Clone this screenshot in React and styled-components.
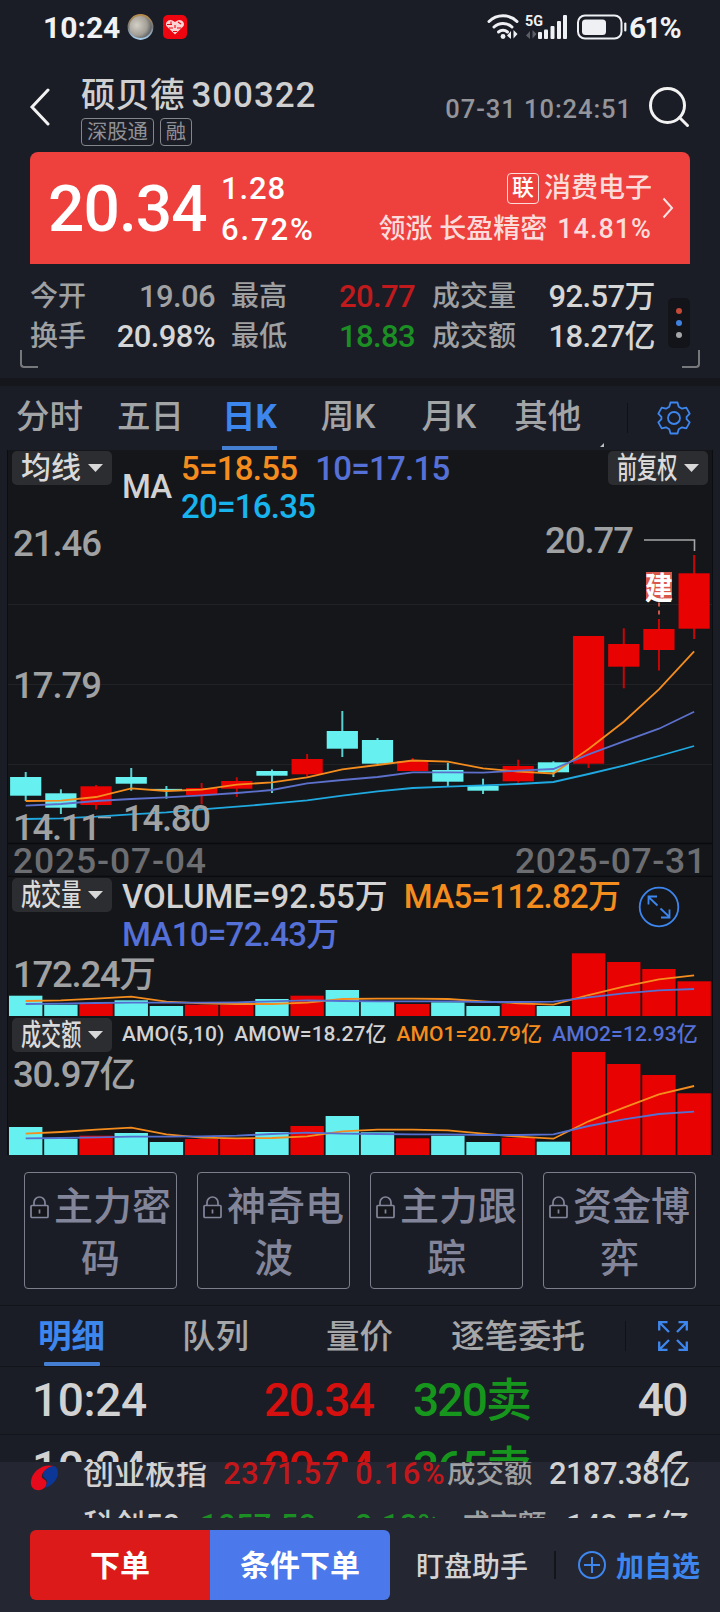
import React from 'react';
import styled, { createGlobalStyle } from 'styled-components';

const RED = '#e80202';
const CYAN = '#66f0ef';
const ORANGE = '#f58d1e';
const INDIGO = '#5570d6';
const SKY = '#18b4ee';
const BLUE = '#3d86ee';

const SLOT = 35.18;
const FIRST = 25.7;
const cx = (i) => FIRST + SLOT * i;

// [up, bodyTop, bodyBottom, wickTop, wickBottom]
const candles = [
  [0, 777, 795.7, 772, 801],
  [0, 793.3, 807.7, 789.3, 814],
  [1, 786.3, 805, 785, 809.5],
  [0, 777, 783.7, 768, 790.7],
  [0, 788.9, 790.1, 786, 798.7],
  [1, 788, 795, 783, 804.3],
  [1, 781, 788.7, 777.3, 797],
  [0, 771, 775.7, 769.5, 793],
  [1, 759, 774.3, 754, 776.7],
  [0, 731, 748.7, 711, 757],
  [0, 740, 763.7, 738, 763.7],
  [1, 761, 771, 758, 771],
  [0, 770, 781.7, 762.7, 786],
  [0, 785.7, 790.7, 778.7, 794],
  [1, 766, 781.3, 759.7, 782.7],
  [0, 762.3, 772.3, 761.3, 777],
  [1, 636, 763.7, 636, 768],
  [1, 644, 666.7, 628.3, 688.3],
  [1, 629, 650, 619, 670.5],
  [1, 573.3, 628.7, 555, 639],
];

const ma5 = [801, 800.7, 797, 788.3, 791, 789.7, 784.7, 782.3, 777.3, 769.3, 765, 760.5, 761.7, 768.3, 771.7, 773.5, 749, 721.7, 689.3, 651.3];
const ma10 = [805.7, 804, 801, 799, 797.3, 795.3, 793, 790, 783.3, 780, 777, 772.3, 772.3, 772.7, 770.7, 769, 754.3, 741.3, 728.7, 711.7];
const ma20 = [819, 818.3, 816.7, 814.3, 812.3, 809.3, 806.7, 803.7, 800.3, 795.7, 791.3, 788, 786.7, 785.3, 784, 782, 774, 765.7, 756, 746];

const volume = [995.7, 1004.7, 1003.3, 1000.3, 1006, 1004.7, 1004.7, 999, 995.7, 990, 1002, 1004, 1002.3, 1006, 1004, 1006, 953.3, 962, 969, 981.3];
const vol5 = [1001, 1000.3, 998.7, 996.7, 1001.7, 1003.3, 1004, 1004, 1002.7, 999, 998.7, 998.7, 999, 1001.3, 1003.3, 1004.7, 995, 986.7, 979.3, 975.3];
const vol10 = [1004, 1003.7, 1003, 1002.7, 1002.7, 1002.7, 1002.3, 1001.3, 1000.3, 1001, 1001.3, 1001.3, 1001.3, 1002, 1002, 1001.7, 997.3, 993.3, 990.3, 989];

const amount = [1127, 1139, 1135.7, 1133, 1142, 1139, 1139, 1132, 1126, 1116, 1132.3, 1138.3, 1135.7, 1142, 1137.7, 1141.7, 1052, 1064, 1075, 1093.3];
const amo5 = [1133.7, 1132, 1129.7, 1127.7, 1134.3, 1137.7, 1138.3, 1138, 1136.3, 1131.3, 1129.7, 1129.7, 1130.3, 1133.7, 1136.7, 1138.7, 1121.3, 1107.7, 1094.3, 1086];
const amo10 = [1138.3, 1138, 1137.3, 1136.7, 1136.7, 1136.3, 1135.7, 1134, 1132.7, 1133.7, 1134, 1134.3, 1134.3, 1135, 1135, 1134.3, 1126, 1119.3, 1114, 1111.7];

const periods = ['分时', '五日', '日K', '周K', '月K', '其他'];
const locked = [['主力密', '码'], ['神奇电', '波'], ['主力跟', '踪'], ['资金博', '弈']];
const detailTabs = ['明细', '队列', '量价', '逐笔委托'];
const trades = [
  ['10:24', '20.34', '320卖', '40'],
  ['10:24', '20.34', '365卖', '46'],
];

const Line = ({ points, color }) => (
  <polyline points={points.map((y, i) => `${cx(i)},${y}`).join(' ')} fill="none" stroke={color} strokeWidth="1.8" />
);

const Bars = ({ tops, bottom }) =>
  tops.map((y, i) => (
    <rect key={i} x={cx(i) - 16.7} y={y} width="33.4" height={bottom - y} fill={candles[i][0] ? RED : CYAN} />
  ));

const Caret = () => (
  <svg width="15" height="8" viewBox="0 0 15 8">
    <path d="M0 0h15L7.5 8z" fill="#d8d8d8" />
  </svg>
);

const Lock = () => (
  <svg width="19" height="23" viewBox="0 0 19 23" fill="none" stroke="#83869a" strokeWidth="1.7">
    <rect x="1" y="9.5" width="17" height="12" rx="1" fill="#15161b" />
    <path d="M4 9.5V6.5a5.5 5.5 0 0 1 11 0v3M9.5 13.5v4" />
  </svg>
);

const App = () => (
  <>
    <Global />
    <Page>
      <StatusBar>
        <Clock>10:24</Clock>
        <svg width="68" height="28" viewBox="0 0 68 28">
          <defs>
            <radialGradient id="pearl" cx="35%" cy="42%" r="65%">
              <stop offset="0" stopColor="#d3d0c8" />
              <stop offset=".65" stopColor="#a39f96" />
              <stop offset="1" stopColor="#55595f" />
            </radialGradient>
            <linearGradient id="rim" x1="0" y1="0" x2="0" y2="1">
              <stop offset="0" stopColor="#b98c4c" />
              <stop offset=".5" stopColor="#77797a" />
              <stop offset="1" stopColor="#a8cdea" />
            </linearGradient>
          </defs>
          <circle cx="17.5" cy="14" r="12" fill="url(#pearl)" stroke="url(#rim)" strokeWidth="1.8" />
          <rect x="40" y="2" width="24" height="24" rx="5" fill="#ee0510" />
          <path d="M52 21.5l-8.4-8.2c-2.4-4 2.6-8 6.3-5.6l2.1 1.3 2.1-1.3c3.7-2.4 8.7 1.6 6.3 5.6z" fill="#fbd4d4" />
          <path d="M44 11.500h5M46 15h4M54 15h4M55 9l3 2M48 8.500v3M52 12v3M50 18.500h4" stroke="#ee0510" strokeWidth="1.100" />
        </svg>
        <Grow />
        <svg width="140" height="28" viewBox="0 0 140 28" fill="none" stroke="#eef0f3" strokeLinecap="round">
          <path d="M2 8.5a20 20 0 0 1 28 0" strokeWidth="3" />
          <path d="M7 14a13 13 0 0 1 18 0" strokeWidth="3" />
          <path d="M11.5 19a7 7 0 0 1 9 0" strokeWidth="3" />
          <circle cx="16" cy="23.5" r="2.4" fill="#eef0f3" stroke="none" />
          <path d="M24 18v8l-4-3.5zM26.5 17v8.5l4-4.5z" fill="#eef0f3" stroke="none" />
          <path d="M43 18v8l-4-3.5zM45.500 17v8.500l4-4.500z" fill="#5b5e66" stroke="none" />
          <text x="38" y="13" fontSize="15" fontWeight="700" fill="#eef0f3" stroke="none" textLength="18" lengthAdjust="spacingAndGlyphs">5G</text>
          <g fill="#eef0f3" stroke="none">
            <rect x="51" y="19" width="4" height="7" rx="1" />
            <rect x="57" y="16.500" width="4" height="9.500" rx="1" />
            <rect x="63.500" y="13" width="4" height="13" rx="1" />
            <rect x="70" y="8" width="4" height="18" rx="1" />
            <rect x="76" y="2" width="4" height="24" rx="1" />
          </g>
          <rect x="91" y="2.500" width="43.500" height="23" rx="7" strokeWidth="2" />
          <rect x="95" y="6.500" width="24" height="15.500" rx="3.500" fill="#eef0f3" stroke="none" />
          <path d="M138.300 10.500v7" strokeWidth="2.200" />
        </svg>
        <Battery>61%</Battery>
      </StatusBar>

      <Header>
        <svg width="22" height="38" viewBox="0 0 22 38" fill="none" stroke="#f2f2f2" strokeWidth="3" strokeLinecap="round">
          <path d="M19 2L3 19l16 17" />
        </svg>
        <Names>
          <StockName>
            <span>硕贝德</span>
            <Code>300322</Code>
          </StockName>
          <Tags>
            <Tag>深股通</Tag>
            <Tag>融</Tag>
          </Tags>
        </Names>
        <Grow />
        <Stamp>07-31 10:24:51</Stamp>
        <svg width="42" height="42" viewBox="0 0 42 42" fill="none" stroke="#f2f2f2" strokeWidth="3">
          <circle cx="19.500" cy="19.500" r="17" />
          <path d="M31.500 31.500l8 8" strokeLinecap="round" />
        </svg>
      </Header>

      <Banner>
        <Price>20.34</Price>
        <Changes>
          <span>1.28</span>
          <Pct>6.72%</Pct>
        </Changes>
        <Grow />
        <Sector>
          <SectorLine>
            <Linked>联</Linked>消费电子
          </SectorLine>
          <SectorLine>
            领涨 长盈精密 <Lead>14.81%</Lead>
          </SectorLine>
        </Sector>
        <svg width="12" height="22" viewBox="0 0 12 22" fill="none" stroke="#fbe3e3" strokeWidth="2">
          <path d="M1.500 1.500L10 11l-8.500 9.500" />
        </svg>
      </Banner>

      <Quotes>
        <QuoteGrid>
          <Label>今开</Label>
          <Value $color="#a0a1a3">19.06</Value>
          <Label>最高</Label>
          <Value $color="#c01a1c">20.77</Value>
          <Label>成交量</Label>
          <Value>92.57万</Value>
          <Label>换手</Label>
          <Value>20.98%</Value>
          <Label>最低</Label>
          <Value $color="#1c8f24">18.83</Value>
          <Label>成交额</Label>
          <Value>18.27亿</Value>
        </QuoteGrid>
        <More>
          <Dot $color="#c24a37" />
          <Dot $color="#3f82e0" />
          <Dot $color="#a5a6a8" />
        </More>
      </Quotes>
      <Corners>
        <Corner />
        <Corner $right />
      </Corners>

      <Tabs>
        {periods.map((name) => (
          <Period key={name} $on={name === '日K'}>
            {name}
          </Period>
        ))}
        <Grow />
        <Notch />
        <Rule />
        <svg width="34" height="34" viewBox="0 0 34 34" fill="none" stroke={BLUE} strokeWidth="1.8" strokeLinejoin="round">
          <path d="M13.500 1.500h7l1.200 4.300 3.300 1.900 4.300-1.100 3.400 6-3.100 3.200v2.400l3.100 3.200-3.400 6-4.300-1.100-3.300 1.900-1.200 4.300h-7l-1.200-4.300L9 26.300l-4.300 1.100-3.400-6 3.100-3.200v-2.400l-3.100-3.200 3.400-6L9 7.700l3.300-1.900z" />
          <circle cx="17" cy="17" r="6" />
        </svg>
      </Tabs>

      <Charts>
        <Pane $height={427}>
          <Plot viewBox="8 450 704 427">
            <path d="M8 604.500h704M8 684.500h704M8 764.500h704" stroke="#212226" strokeWidth="1.200" />
            <path d="M8 843.500h704M8 876.500h704" stroke="#0a0b0e" strokeWidth="1.500" />
            {candles.map(([up, top, bottom, high, low], i) => (
              <g key={i} fill={up ? RED : CYAN}>
                <rect x={cx(i) - 1} y={high} width="2" height={low - high} opacity=".85" />
                <rect x={cx(i) - 15.6} y={top} width="31.200" height={bottom - top} />
              </g>
            ))}
            <Line points={ma5} color={ORANGE} />
            <Line points={ma10} color="#5c70cc" />
            <Line points={ma20} color="#1fa9e0" />
            <path d="M644 540h50.500v11" fill="none" stroke="#a5a6a8" strokeWidth="1.600" />
            <path d="M98 817.500h13" stroke="#a5a6a8" strokeWidth="1.600" />
            <rect x="646" y="572" width="26" height="28" fill="#d9564c" />
            <MarkText x="645" y="599" textLength="28" lengthAdjust="spacingAndGlyphs">建</MarkText>
            <path d="M659 602.500v14" stroke="#c9574c" strokeWidth="2" strokeDasharray="4 4" />
            <AxisText x="13" y="556" textLength="89">21.46</AxisText>
            <AxisText x="13" y="698" textLength="89">17.79</AxisText>
            <AxisText x="13" y="840" textLength="88">14.11</AxisText>
            <AxisText x="123" y="831" textLength="88">14.80</AxisText>
            <AxisText x="545" y="553" textLength="89">20.77</AxisText>
            <DateText x="13" y="873" textLength="193">2025-07-04</DateText>
            <DateText x="515" y="873" textLength="191">2025-07-31</DateText>
          </Plot>
          <Legend>
            <Picker $loose>
              <b>均线</b>
              <Caret />
            </Picker>
            <MaName>MA</MaName>
            <MaValues>
              <Stat $color={ORANGE}>5=18.55</Stat>
              <Stat $color={INDIGO}>10=17.15</Stat>
              <Stat $color={SKY}>20=16.35</Stat>
            </MaValues>
            <Picker>
              <b>前复权</b>
              <Caret />
            </Picker>
          </Legend>
        </Pane>
        <Pane $height={140}>
          <Plot viewBox="8 877 704 140">
            <Bars tops={volume} bottom={1016} />
            <Line points={vol5} color={ORANGE} />
            <Line points={vol10} color="#5570d0" />
            <AxisText x="13" y="987" textLength="143">172.24万</AxisText>
          </Plot>
          <Legend>
            <Picker>
              <b>成交量</b>
              <Caret />
            </Picker>
            <VolValues>
              <Stat $spacing={0}>VOLUME=92.55万</Stat>
              <Stat $spacing={-0.7} $color={ORANGE}>MA5=112.82万</Stat>
              <Stat $spacing={-0.7} $color={INDIGO}>MA10=72.43万</Stat>
            </VolValues>
            <Expand width="42" height="42" viewBox="0 0 42 42" fill="none" stroke={BLUE} strokeWidth="1.8">
              <circle cx="21" cy="21" r="19.300" />
              <path d="M19.500 19.500L10.500 11M10.500 18.500V10.500h8.500M22.500 22.500l9 8.500M31.500 23.500v8H23" />
            </Expand>
          </Legend>
        </Pane>
        <Pane $height={138}>
          <Plot viewBox="8 1017 704 138">
            <Bars tops={amount} bottom={1155} />
            <Line points={amo5} color={ORANGE} />
            <Line points={amo10} color="#5570d0" />
            <AxisText x="13" y="1087" textLength="123">30.97亿</AxisText>
          </Plot>
          <Legend>
            <Picker>
              <b>成交额</b>
              <Caret />
            </Picker>
            <AmoValues>
              <span>AMO(5,10)</span>
              <span>AMOW=18.27亿</span>
              <Amo $color={ORANGE}>AMO1=20.79亿</Amo>
              <Amo $color={INDIGO}>AMO2=12.93亿</Amo>
            </AmoValues>
          </Legend>
        </Pane>
      </Charts>

      <LockedRow>
        {locked.map(([first, rest]) => (
          <LockedBox key={first}>
            <LockedLine>
              <Lock />
              {first}
            </LockedLine>
            <LockedLine>{rest}</LockedLine>
          </LockedBox>
        ))}
      </LockedRow>

      <DetailTabs>
        {detailTabs.map((name, i) => (
          <Detail key={name} $on={i === 0}>
            {name}
          </Detail>
        ))}
        <Rule />
        <svg width="30" height="30" viewBox="0 0 30 30" fill="none" stroke={BLUE} strokeWidth="2.300">
          <path d="M11 11L2 2M1.200 9.500V1.200h8.300M19 11l9-9M20.500 1.200h8.300v8.300M11 19l-9 9M1.200 20.500v8.300h8.300M19 19l9 9M28.800 20.500v8.300h-8.300" />
        </svg>
      </DetailTabs>

      <Trades>
        {trades.map(([time, price, lots, count], i) => (
          <Trade key={i}>
            <Cell>{time}</Cell>
            <Cell $color="#d60f0f" $spacing={-1.6}>{price}</Cell>
            <Cell $color="#16961c" $spacing={-1.8}>{lots}</Cell>
            <Cell $end $spacing={-1.5}>{count}</Cell>
          </Trade>
        ))}
      </Trades>

      <Footer>
        <Ticker>
          <svg width="30" height="28" viewBox="0 0 30 28">
            <path d="M24 2C12-1 2 8 1 17c-1 7 4 10 9 9 5-1 8-6 6-9-2-3-5-2-4-6 1-4 6-7 12-9z" fill="#e60a1c" />
            <path d="M24 2c-7 1-11 5-11 9 0 3 4 3 4 7 0 2-1 4-2 6 7-2 12-8 13-14 0-4-1-7-4-8z" fill="#0c3796" />
          </svg>
          <TickerRule />
          <Indexes>
            <IndexRow>
              <IndexName $width={140}>创业板指</IndexName>
              <IndexNum $color="#c4171b" $width={132}>2371.57</IndexNum>
              <IndexNum $color="#c4171b" $width={92} $spacing={1.3}>0.16%</IndexNum>
              <IndexLabel $width={102}>成交额</IndexLabel>
              <IndexNum $end>2187.38亿</IndexNum>
            </IndexRow>
            <IndexRow>
              <IndexName $width={117}>科创50</IndexName>
              <IndexNum $color="#1c8f24" $width={144}>1057.50</IndexNum>
              <IndexNum $color="#1c8f24" $width={117}>-0.18%</IndexNum>
              <IndexLabel $width={80}>成交额</IndexLabel>
              <IndexNum $end>148.56亿</IndexNum>
            </IndexRow>
          </Indexes>
        </Ticker>
        <Actions>
          <Order $color="#dc1a1a">下单</Order>
          <Order $color="#4b78ea">条件下单</Order>
          <Watch>盯盘助手</Watch>
          <TickerRule $tall />
          <Add>
            <svg width="30" height="30" viewBox="0 0 30 30" fill="none" stroke={BLUE} strokeWidth="2">
              <circle cx="15" cy="15" r="13" />
              <path d="M15 7v16M7 15h16" />
            </svg>
            加自选
          </Add>
        </Actions>
      </Footer>
    </Page>
  </>
);

const Global = createGlobalStyle`
  * {
    box-sizing: border-box;
  }
  body {
    margin: 0;
    background: #1b1d26;
  }
  svg {
    flex: none;
    display: block;
  }
`;

const Page = styled.div`
  width: 720px;
  height: 1612px;
  overflow: hidden;
  display: flex;
  flex-direction: column;
  background: #1b1d26;
  color: #d2d2d2;
  font-family: Roboto, 'Noto Sans CJK SC', sans-serif;
  font-weight: 500;
  white-space: nowrap;
`;

const Grow = styled.div`
  flex: 1;
`;

const StatusBar = styled.div`
  display: flex;
  align-items: center;
  flex: none;
  height: 54px;
  padding: 0 40px 0 43px;
  color: #f1f2f4;
`;

const Clock = styled.div`
  width: 80px;
  font-size: 30px;
  font-weight: 700;
`;

const Battery = styled.div`
  width: 53px;
  padding-left: 2px;
  font-size: 30px;
  font-weight: 700;
  letter-spacing: -2px;
`;

const Header = styled.div`
  display: flex;
  align-items: center;
  flex: none;
  height: 98px;
  padding: 8px 30px 0 29px;
`;

const Names = styled.div`
  margin: 4px 0 0 30px;
`;

const StockName = styled.div`
  display: flex;
  align-items: center;
  height: 44px;
  margin-bottom: 1px;
  font-size: 34.5px;
  line-height: 44px;
  color: #d0d0d0;
`;

const Code = styled.span`
  margin-left: 7px;
  padding-top: 2px;
  font-size: 35px;
  letter-spacing: 0.9px;
`;

const Tags = styled.div`
  display: flex;
  gap: 6px;
`;

const Tag = styled.div`
  height: 28px;
  padding: 0 5px;
  border: 1px solid #85868b;
  border-radius: 4px;
  font-size: 20.3px;
  line-height: 26px;
  font-weight: 400;
  color: #909196;
`;

const Stamp = styled.div`
  margin-right: 16px;
  padding-top: 3px;
  font-size: 25.5px;
  letter-spacing: 0.95px;
  color: #94959a;
`;

const Banner = styled.div`
  display: flex;
  align-items: center;
  flex: none;
  height: 112px;
  margin: 0 30px;
  padding: 0 16px 0 18px;
  border-radius: 8px 8px 0 0;
  background: #ee403d;
  color: #fff;
`;

const Price = styled.div`
  width: 173px;
  padding-top: 2px;
  font-size: 64px;
  letter-spacing: -0.9px;
`;

const Changes = styled.div`
  display: flex;
  flex-direction: column;
  padding-top: 1px;
  font-size: 31px;
  line-height: 41px;
  letter-spacing: 0.9px;
`;

const Pct = styled.span`
  letter-spacing: 1.9px;
`;

const Sector = styled.div`
  margin-right: 10px;
  padding-top: 1px;
`;

const SectorLine = styled.div`
  display: flex;
  align-items: center;
  justify-content: flex-end;
  gap: 7px;
  height: 41px;
  font-size: 27px;
  line-height: 36px;
  color: #fbdcdb;
`;

const Linked = styled.span`
  width: 32px;
  height: 31px;
  margin-right: -2px;
  border: 1.5px solid #fbdcdb;
  border-radius: 4px;
  font-size: 22px;
  line-height: 27px;
  text-align: center;
  color: #fff;
`;

const Lead = styled.span`
  margin-left: 3px;
  letter-spacing: 1px;
`;

const Quotes = styled.div`
  display: flex;
  align-items: center;
  flex: none;
  height: 88px;
  margin-top: 10px;
  padding: 0 30px 3px;
`;

const QuoteGrid = styled.div`
  display: grid;
  grid-template-columns: 75px 110px 90px 110px 105px 135px;
  grid-template-rows: 40px 40px;
  align-items: center;
  flex: none;
  width: 625px;

  > :nth-child(6n + 3) {
    padding-left: 16px;
  }
  > :nth-child(6n + 5) {
    padding-left: 17px;
  }
`;

const Label = styled.div`
  font-size: 28px;
  line-height: 38px;
  color: #9fa0a2;
`;

const Value = styled.div`
  font-size: 31px;
  line-height: 40px;
  letter-spacing: -0.6px;
  text-align: right;
  color: ${(p) => p.$color || '#d6d6d6'};
`;

const More = styled.div`
  display: flex;
  flex-direction: column;
  align-items: center;
  justify-content: center;
  gap: 6px;
  width: 22px;
  height: 50px;
  margin: 13px 0 0 13px;
  border-radius: 5px;
  background: #131419;
`;

const Dot = styled.i`
  width: 6px;
  height: 6px;
  border-radius: 50%;
  background: ${(p) => p.$color};
`;

const Corners = styled.div`
  display: flex;
  justify-content: space-between;
  height: 24px;
  margin-top: -12px;
  padding: 0 20px;
  flex: none;
`;

const Corner = styled.div`
  width: 18px;
  height: 18px;
  border: 2px solid #77787c;
  border-top: 0;
  ${(p) => (p.$right ? 'border-left: 0; border-bottom-right-radius: 4px;' : 'border-right: 0; border-bottom-left-radius: 4px;')}
`;

const Tabs = styled.div`
  display: flex;
  flex: none;
  height: 72px;
  margin-top: 4px;
  padding: 0 29px 0 16px;
  border-top: 8px solid #15161b;
  align-items: center;

  > svg {
    margin-left: 29px;
  }
`;

const Period = styled.div`
  height: 64px;
  margin-right: 34px;
  border-bottom: 4px solid ${(p) => (p.$on ? '#447fd3' : 'transparent')};
  font-size: 33.5px;
  line-height: 62px;
  font-weight: ${(p) => (p.$on ? 700 : 500)};
  color: ${(p) => (p.$on ? BLUE : '#a3a4a6')};

  &:nth-child(2) {
    margin-right: 38px;
  }
  &:nth-child(3) {
    margin-right: 44px;
  }
  &:nth-child(4) {
    margin-right: 46px;
  }
  &:nth-child(5) {
    margin-right: 38px;
  }
  &:nth-child(6) {
    margin-right: 0;
  }
`;

const Notch = styled.i`
  align-self: flex-end;
  margin: 0 23px 3px 0;
  border: 2px solid transparent;
  border-right-color: #c0c0c0;
  border-bottom-color: #c0c0c0;
`;

const Rule = styled.i`
  width: 1px;
  height: 30px;
  background: #101116;
`;

const Charts = styled.div`
  flex: none;
  margin: 0 7px;
  border: 0 solid #0c0d11;
  border-width: 0 1px;
  background: #15161a;
`;

const Pane = styled.div`
  position: relative;
  height: ${(p) => p.$height}px;
`;

const Plot = styled.svg`
  position: absolute;
  inset: 0;
  width: 704px;
  height: 100%;
`;

const AxisText = styled.text`
  font-size: 36.5px;
  font-weight: 500;
  fill: #a0a1a3;
`;

const DateText = styled(AxisText)`
  font-size: 35.5px;
  fill: #6d6e72;
`;

const MarkText = styled.text`
  font-size: 31px;
  font-weight: 700;
  fill: #fff;
`;

const Legend = styled.div`
  position: relative;
  display: flex;
  align-items: flex-start;
  padding: 0 4px;
`;

const Picker = styled.div`
  flex: none;
  display: flex;
  align-items: center;
  justify-content: space-between;
  width: 100px;
  height: 34px;
  margin-top: 1px;
  padding: 0 9px;
  border-radius: 5px;
  background: #2c2d31;
  color: #dadada;

  b {
    width: 60px;
    font-size: 30px;
    line-height: 34px;
    font-weight: 500;
    transform: scaleX(${(p) => (p.$loose ? 1 : 0.67)});
    transform-origin: left;
  }
`;

const MaName = styled.div`
  width: 69px;
  padding: 16px 0 0 10px;
  font-size: 33px;
  line-height: 42px;
  letter-spacing: -0.8px;
`;

const MaValues = styled.div`
  display: flex;
  flex-wrap: wrap;
  column-gap: 18px;
  width: 427px;
  padding-right: 100px;
`;

const Stat = styled.div`
  font-size: 33px;
  line-height: 38px;
  letter-spacing: ${(p) => p.$spacing ?? -0.75}px;
  color: ${(p) => p.$color || '#d2d2d2'};
`;

const VolValues = styled.div`
  display: flex;
  flex-wrap: wrap;
  column-gap: 16px;
  width: 513px;
  padding: 1px 0 0 10px;
`;

const Expand = styled.svg`
  margin: 9px 0 0 13px;
`;

const AmoValues = styled.div`
  display: flex;
  gap: 10px;
  padding-left: 10px;
  font-size: 21px;
  line-height: 34px;
  letter-spacing: 0.05px;
`;

const Amo = styled.span`
  color: ${(p) => p.$color};
`;

const LockedRow = styled.div`
  flex: none;
  display: flex;
  gap: 20px;
  height: 150px;
  padding: 17px 24px;
`;

const LockedBox = styled.div`
  width: 153px;
  height: 117px;
  padding-top: 8px;
  border: 1px solid #7c7e8c;
  border-radius: 4px;
  color: #83869a;
  font-size: 39px;
`;

const LockedLine = styled.div`
  display: flex;
  justify-content: center;
  align-items: center;
  gap: 5px;
  height: 52px;
  line-height: 52px;

  svg {
    margin-top: 1px;
  }
`;

const DetailTabs = styled.div`
  flex: none;
  display: flex;
  align-items: center;
  height: 62px;
  padding-left: 38px;
  border-top: 1px solid #14151b;
  border-bottom: 1px solid #14151b;

  > svg {
    margin-left: 32px;
  }
`;

const Detail = styled.div`
  position: relative;
  height: 60px;
  margin-right: 77px;
  font-size: 33.5px;
  line-height: 61px;
  font-weight: ${(p) => (p.$on ? 700 : 500)};
  color: ${(p) => (p.$on ? BLUE : '#a6a7a8')};

  &:nth-child(3) {
    margin-right: 58px;
  }
  &:nth-child(4) {
    margin-right: 40px;
  }
  &:first-child::after {
    content: '';
    position: absolute;
    left: 6px;
    right: 5px;
    bottom: 0;
    height: 4px;
    border-radius: 1px;
    background: #447fd3;
  }
`;

const Trades = styled.div`
  flex: 1;
  min-height: 0;
  overflow: hidden;
`;

const Trade = styled.div`
  display: grid;
  grid-template-columns: 232px 149px 1fr auto;
  align-items: center;
  height: 68px;
  padding: 0 33px 0 32px;
  border-bottom: 1px solid #14151b;
`;

const Cell = styled.div`
  font-size: 46px;
  line-height: 67px;
  letter-spacing: ${(p) => p.$spacing ?? -0.4}px;
  text-align: ${(p) => (p.$end ? 'right' : 'left')};
  color: ${(p) => p.$color || '#d2d2d2'};
`;

const Footer = styled.div`
  flex: none;
  height: 150px;
  background: #242631;
`;

const Ticker = styled.div`
  display: flex;
  height: 56px;
  padding: 0 31px 0 30px;
  overflow: hidden;

  svg {
    margin-top: 2px;
  }
`;

const TickerRule = styled.i`
  width: ${(p) => (p.$tall ? 2 : 1)}px;
  height: ${(p) => (p.$tall ? 28 : 24)}px;
  margin: ${(p) => (p.$tall ? '0' : '4px 0 0 10px')};
  background: #14151b;
`;

const Indexes = styled.div`
  flex: 1;
  margin: -10px 0 0 13px;
`;

const IndexRow = styled.div`
  display: flex;
  align-items: center;
  height: 44px;
  margin-bottom: 8px;
`;

const IndexName = styled.div`
  flex: none;
  width: ${(p) => p.$width}px;
  font-size: 31px;
  line-height: 44px;
`;

const IndexNum = styled.div`
  ${(p) => (p.$end ? 'margin-left: auto;' : `flex: none; width: ${p.$width}px;`)}
  font-size: 31px;
  line-height: 44px;
  letter-spacing: ${(p) => p.$spacing ?? (p.$end ? -0.6 : 0.3)}px;
  color: ${(p) => p.$color || '#d2d2d2'};
`;

const IndexLabel = styled(IndexName)`
  font-size: 28.5px;
  color: #9fa0a2;
`;

const Actions = styled.div`
  display: flex;
  align-items: center;
  padding: 12px 20px 0 30px;
`;

const Order = styled.div`
  width: 180px;
  height: 70px;
  border-radius: 0 6px 6px 0;
  background: ${(p) => p.$color};
  font-size: 30px;
  line-height: 71px;
  font-weight: 700;
  text-align: center;
  color: #fff;

  &:first-child {
    border-radius: 6px 0 0 6px;
  }
`;

const Watch = styled.div`
  width: 164px;
  padding-left: 26px;
  font-size: 28px;
`;

const Add = styled.div`
  display: flex;
  align-items: center;
  gap: 9px;
  margin-left: 21px;
  font-size: 28px;
  font-weight: 700;
  color: ${BLUE};
`;

export default App;
